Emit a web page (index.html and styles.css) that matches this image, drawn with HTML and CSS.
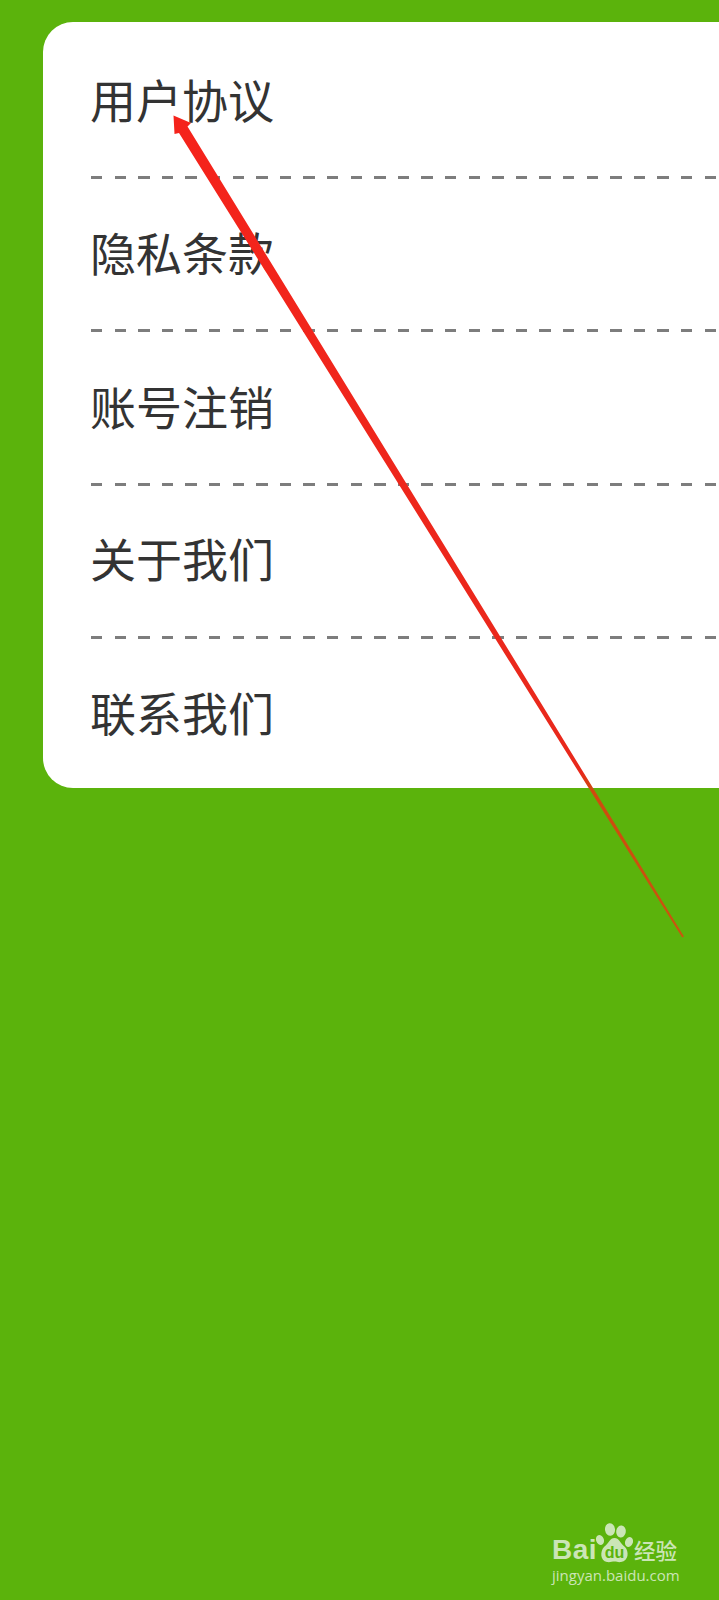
FILE: index.html
```html
<!DOCTYPE html>
<html lang="zh-CN">
<head>
<meta charset="utf-8">
<title>设置</title>
<link rel="stylesheet" href="styles.css">
</head>
<body>
<main class="page">
  <ul class="menu">
    <li class="menu-item">用户协议</li>
    <li class="menu-item">隐私条款</li>
    <li class="menu-item">账号注销</li>
    <li class="menu-item">关于我们</li>
    <li class="menu-item">联系我们</li>
  </ul>
  <svg class="arrow" viewBox="0 0 719 1600" aria-hidden="true">
    <defs>
      <linearGradient id="arrowFill" gradientUnits="userSpaceOnUse" x1="174" y1="116" x2="683" y2="937">
        <stop offset="0" stop-color="#f5231b"/>
        <stop offset="0.8" stop-color="#e8291c"/>
        <stop offset="0.82" stop-color="#cf4a0f"/>
        <stop offset="1" stop-color="#c8560e"/>
      </linearGradient>
    </defs>
    <path class="arrow-body" d="M173.500 115.500 L191 123 L187.500 126.500 L684 936.400 L682.200 937.500 L179 133 L174.500 134 Z"/>
  </svg>
  <div class="watermark">
    <div class="wm-top">
      <span class="wm-bai">Bai</span>
      <svg class="wm-paw" viewBox="0 0 38 40" aria-hidden="true">
        <ellipse cx="5" cy="17" rx="3.900" ry="5" transform="rotate(-20 5 17)"/>
        <ellipse cx="15" cy="6.500" rx="5" ry="6.300" transform="rotate(-8 15 6.500)"/>
        <ellipse cx="26" cy="8.500" rx="4.800" ry="6" transform="rotate(8 26 8.500)"/>
        <ellipse cx="34" cy="19" rx="3.900" ry="5" transform="rotate(20 34 19)"/>
        <path d="M19.500 15 C24 15 25 20 30 24 C34 28 34 38 26 39 C23 39.500 22 38.500 19.500 38.500 C17 38.500 15 39.500 12 39 C5 38 5 28 9 24 C14 20 15 15 19.500 15 Z"/>
        <text class="wm-du" x="19.500" y="34.500">du</text>
      </svg>
      <span class="wm-cn">经验</span>
    </div>
    <div class="wm-url">jingyan.baidu.com</div>
  </div>
</main>
</body>
</html>
```
FILE: styles.css
```css
* { box-sizing: border-box; }
html, body { margin: 0; padding: 0; }
body { background: #5bb30c; font-family: "Noto Sans CJK SC", "Noto Sans", sans-serif; }
.page { position: relative; width: 719px; height: 1600px; overflow: hidden; padding: 22px 0 0 43px; }
.menu { list-style: none; margin: 0; padding: 3px 0 0 47px; background: #fff; border-radius: 30px 0 0 30px; height: 766px; }
.menu-item {
  height: 153.500px;
  display: flex;
  align-items: center;
  font-size: 46px;
  line-height: 1;
  color: #333;
  padding-bottom: 8px;
  background-image: repeating-linear-gradient(90deg, #7d7d7d 0 11.500px, transparent 11.500px 23.600px);
  background-size: 100% 3px;
  background-position: 1px bottom;
  background-repeat: no-repeat;
}
.menu-item:nth-child(4) { padding-bottom: 10px; }
.menu-item:last-child { background: none; height: 149px; padding-bottom: 6px; }
.arrow { position: absolute; left: 0; top: 0; width: 719px; height: 1600px; }
.arrow-body { fill: url(#arrowFill); }
.watermark { position: absolute; left: 552px; top: 1523px; width: 130px; color: #cbe5b6; }
.wm-top { display: flex; align-items: flex-end; height: 40px; }
.wm-bai { font-family: "Liberation Sans", sans-serif; font-weight: 700; font-size: 28px; line-height: 1; letter-spacing: 0.500px; width: 43px; margin-bottom: -1px; }
.wm-paw { width: 38px; height: 40px; fill: #cbe5b6; flex: none; }
.wm-du { font-family: "Liberation Sans", sans-serif; font-size: 16px; font-weight: 700; text-anchor: middle; fill: #5bb30c; }
.wm-cn { font-size: 21.500px; line-height: 1; margin-left: 1px; margin-bottom: 3px; white-space: nowrap; font-weight: 500; }
.wm-url { font-family: "Open Sans", sans-serif; font-size: 15px; line-height: 1; margin-top: 5px; white-space: nowrap; }
```
